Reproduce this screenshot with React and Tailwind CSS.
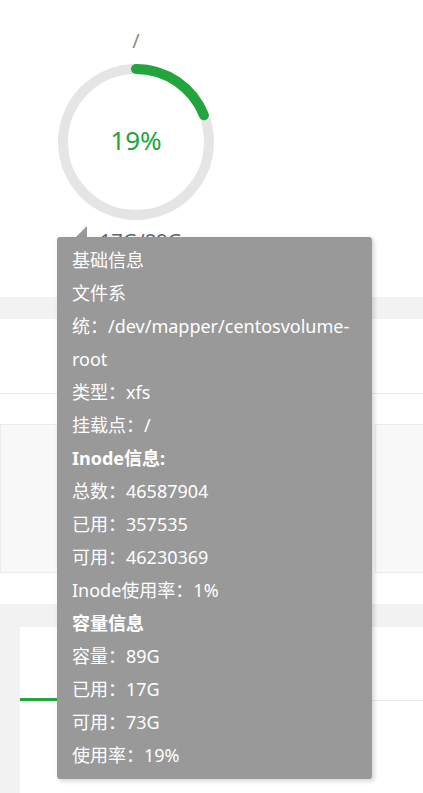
import React from "react";

const lines = [
  { t: "基础信息" },
  { t: "文件系" },
  { t: "统：/dev/mapper/centosvolume-" },
  { t: "root" },
  { t: "类型：xfs" },
  { t: "挂载点：/" },
  { t: "Inode信息:", b: true },
  { t: "总数：46587904" },
  { t: "已用：357535" },
  { t: "可用：46230369" },
  { t: "Inode使用率：1%" },
  { t: "容量信息", b: true },
  { t: "容量：89G" },
  { t: "已用：17G" },
  { t: "可用：73G" },
  { t: "使用率：19%" },
];

export default function App() {
  const r = 73;
  const c = 2 * Math.PI * r;
  const pct = 0.19;
  return (
    <div
      className="relative w-[423px] h-[793px] overflow-hidden bg-white"
      style={{ fontFamily: '"Noto Sans","Noto Sans CJK SC",sans-serif' }}
    >
      {/* top gauge section */}
      <div className="h-[297px] flex flex-col pl-[58px]">
        <div className="w-[156px] mt-[27px] h-[28px] text-center text-[20px] leading-[28px] text-[#8a8a8a]">
          /
        </div>
        <div className="relative w-[156px] h-[156px] mt-[9px]">
          <svg width="156" height="156" viewBox="0 0 156 156">
            <circle cx="78" cy="78" r={r} fill="none" stroke="#e5e5e5" strokeWidth="10" />
            <circle
              cx="78"
              cy="78"
              r={r}
              fill="none"
              stroke="#21a53c"
              strokeWidth="10"
              strokeLinecap="round"
              strokeDasharray={`${c * pct} ${c}`}
              transform="rotate(-90 78 78)"
            />
          </svg>
          <div className="absolute inset-0 flex items-center justify-center text-[26px] text-[#21a53c] pb-[4px]">
            19%
          </div>
        </div>
        <div className="w-[166px] mt-[9px] text-center text-[20px] leading-[24px] text-[#5b6470]">
          17G/89G
        </div>
      </div>

      {/* gray band */}
      <div className="h-[22px] bg-[#f2f2f2]" />
      <div className="h-[75px] border-b border-[#ebebeb]" />
      <div className="h-[30px]" />
      <div className="flex gap-[9px] h-[149px]">
        <div className="w-[366px] shrink-0 bg-[#f8f8f8] border border-[#ebebeb]" />
        <div className="w-[366px] shrink-0 bg-[#f8f8f8] border border-[#ebebeb]" />
      </div>
      <div className="h-[31px]" />
      <div className="bg-[#f2f2f2] pt-[23px] pl-[20px] h-[300px]">
        <div className="bg-white h-full">
          <div className="flex h-[74px] border-b border-[#ebebeb]">
            <div className="w-[110px] h-[74px] border-b-[3px] border-[#21a53c]" />
          </div>
        </div>
      </div>

      {/* tooltip arrow */}
      <svg className="absolute left-[75px] top-[226px]" width="13" height="12" viewBox="0 0 13 12">
        <polygon points="0,12 12,0 12,12" fill="#999999" />
      </svg>

      {/* tooltip */}
      <div className="absolute left-[57px] top-[237px] w-[315px] bg-[#999999] rounded-[3px] shadow-[2px_2px_5px_rgba(0,0,0,0.18)] px-[15px] py-[7px] text-white text-[18px] leading-[33px]">
        {lines.map((l, i) => (
          <div key={i} className={l.b ? "font-bold whitespace-nowrap" : "whitespace-nowrap"}>
            {l.t}
          </div>
        ))}
      </div>
    </div>
  );
}
